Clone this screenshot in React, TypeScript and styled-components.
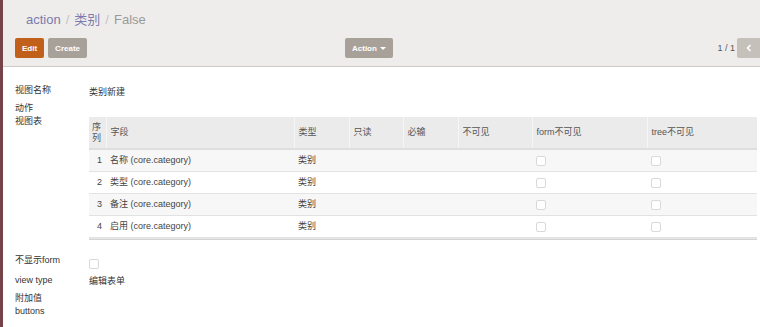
import React from "react";
import styled, { createGlobalStyle } from "styled-components";

const Global = createGlobalStyle`
    html, body {
        margin: 0;
        padding: 0;
        background: #fff;
        overflow: hidden;
    }
    body {
        font-family: "Liberation Sans", "Noto Sans CJK SC", Arial, sans-serif;
        color: #4c4c4c;
    }
`

const Page = styled.div`
    width: 760px;
    height: 327px;
    border-left: 3px solid #77434a;
    box-sizing: border-box;
    overflow: hidden;
    background: #fff;
`

// Control panel

const ControlPanel = styled.div`
    height: 66px;
    background: #eeedeb;
    border-bottom: 1px solid #cfcbc7;
    padding: 0 0 0 12px;
    box-sizing: content-box;
`

const Breadcrumb = styled.ol`
    margin: 0;
    padding: 2px 0 0 11px;
    height: 38px;
    box-sizing: border-box;
    list-style: none;
    display: flex;
    align-items: center;
    font-size: 13px;
    line-height: 16px;
`

const Crumb = styled.li<{ $active?: boolean }>`
    color: ${p => (p.$active ? "#9a9a9a" : "#7c7bad")};
    &:not(:first-child)::before {
        content: "/";
        color: #c4c4c4;
        padding: 0 5px;
    }
`

const ButtonRow = styled.div`
    display: flex;
    align-items: center;
    height: 20px;
`

const LeftButtons = styled.div`
    display: flex;
    gap: 4px;
    width: 330px;
`

const Btn = styled.button<{ $kind?: "primary" | "secondary" }>`
    height: 20px;
    padding: 0 7px;
    border: none;
    border-radius: 2px;
    font-family: inherit;
    font-size: 8px;
    font-weight: bold;
    color: #fff;
    background: ${p => (p.$kind === "primary" ? "#c0601a" : "#a8a19a")};
`

const Caret = styled.span`
    display: inline-block;
    margin-left: 3px;
    vertical-align: middle;
    border-top: 3px solid #fff;
    border-left: 3px solid transparent;
    border-right: 3px solid transparent;
`

const Pager = styled.div`
    margin-left: auto;
    display: flex;
    align-items: center;
    gap: 2px;
    font-size: 9px;
    color: #555;
`

const PagerBtn = styled.span`
    width: 23px;
    height: 20px;
    display: flex;
    align-items: center;
    justify-content: center;
    background: #c6c0ba;
    border-radius: 2px 0 0 2px;
`

// Form

const Sheet = styled.div`
    padding: 17px 3px 0 12px;
    font-size: 9px;
    line-height: 13px;
`

const Row = styled.div<{ $h?: number }>`
    display: flex;
    min-height: ${p => p.$h ?? 13}px;
`

const Label = styled.div`
    width: 74px;
    flex: none;
    color: #333;
`

const Value = styled.div<{ $top?: number }>`
    flex: 1;
    padding-top: ${p => p.$top ?? 0}px;
    min-width: 0;
    color: #333;
`

const Table = styled.table`
    width: 100%;
    border-collapse: collapse;
    font-size: 9px;
    color: #444;
    th, td {
        text-align: left;
        padding: 0 4px;
    }
    thead th {
        background: #ebebeb;
        font-weight: normal;
        color: #555;
        height: 31px;
        border-left: 1px solid #f6f6f6;
        border-bottom: 2px solid #dedede;
        line-height: 11px;
    }
    thead th:first-child {
        border-left: none;
    }
    tbody td {
        height: 21px;
        border-bottom: 1px solid #e2e2e2;
    }
    tbody tr:nth-child(odd) td {
        background: #f7f7f7;
    }
    tfoot td {
        height: 1px;
        padding: 0;
        background: #e6e6e6;
        border-top: 1px solid #c9c9c9;
        border-bottom: 1px solid #d4d4d4;
    }
`

const Num = styled.td`
    text-align: right !important;
`

const Box = styled.span`
    display: inline-block;
    width: 8px;
    height: 8px;
    border: 1px solid #d9d9d9;
    border-radius: 2px;
    background: #fff;
    vertical-align: middle;
`

const rows = [
    { n: 1, field: "名称 (core.category)" },
    { n: 2, field: "类型 (core.category)" },
    { n: 3, field: "备注 (core.category)" },
    { n: 4, field: "启用 (core.category)" },
]

export default function App() {
    return (
        <Page>
            <Global />
            <ControlPanel>
                <Breadcrumb>
                    <Crumb>action</Crumb>
                    <Crumb>类别</Crumb>
                    <Crumb $active>False</Crumb>
                </Breadcrumb>
                <ButtonRow>
                    <LeftButtons>
                        <Btn $kind="primary">Edit</Btn>
                        <Btn>Create</Btn>
                    </LeftButtons>
                    <Btn>Action<Caret /></Btn>
                    <Pager>
                        <span>1 / 1</span>
                        <PagerBtn>
                            <svg width="6" height="8" viewBox="0 0 6 8">
                                <path d="M4.5 1 L1.5 4 L4.5 7" stroke="#fff" strokeWidth="1.6" fill="none" />
                            </svg>
                        </PagerBtn>
                    </Pager>
                </ButtonRow>
            </ControlPanel>
            <Sheet>
                <Row $h={18}>
                    <Label>视图名称</Label>
                    <Value $top={2}>类别新建</Value>
                </Row>
                <Row>
                    <Label>动作</Label>
                    <Value />
                </Row>
                <Row $h={139}>
                    <Label>视图表</Label>
                    <Value $top={2}>
                        <Table>
                            <colgroup>
                                <col style={{ width: 17 }} />
                                <col style={{ width: 188 }} />
                                <col style={{ width: 55 }} />
                                <col style={{ width: 54 }} />
                                <col style={{ width: 55 }} />
                                <col style={{ width: 74 }} />
                                <col style={{ width: 115 }} />
                                <col />
                            </colgroup>
                            <thead>
                                <tr>
                                    <th style={{ padding: "0 2px 0 3px" }}>序<br />列</th>
                                    <th>字段</th>
                                    <th>类型</th>
                                    <th>只读</th>
                                    <th>必输</th>
                                    <th>不可见</th>
                                    <th>form不可见</th>
                                    <th>tree不可见</th>
                                </tr>
                            </thead>
                            <tbody>
                                {rows.map(r => (
                                    <tr key={r.n}>
                                        <Num>{r.n}</Num>
                                        <td>{r.field}</td>
                                        <td>类别</td>
                                        <td />
                                        <td />
                                        <td />
                                        <td><Box /></td>
                                        <td><Box /></td>
                                    </tr>
                                ))}
                            </tbody>
                            <tfoot>
                                <tr><td colSpan={8} /></tr>
                            </tfoot>
                        </Table>
                    </Value>
                </Row>
                <Row $h={20}>
                    <Label>不显示form</Label>
                    <Value $top={3}><Box /></Value>
                </Row>
                <Row $h={18}>
                    <Label>view type</Label>
                    <Value $top={1}>编辑表单</Value>
                </Row>
                <Row>
                    <Label>附加值</Label>
                    <Value />
                </Row>
                <Row>
                    <Label>buttons</Label>
                    <Value />
                </Row>
            </Sheet>
        </Page>
    )
}
